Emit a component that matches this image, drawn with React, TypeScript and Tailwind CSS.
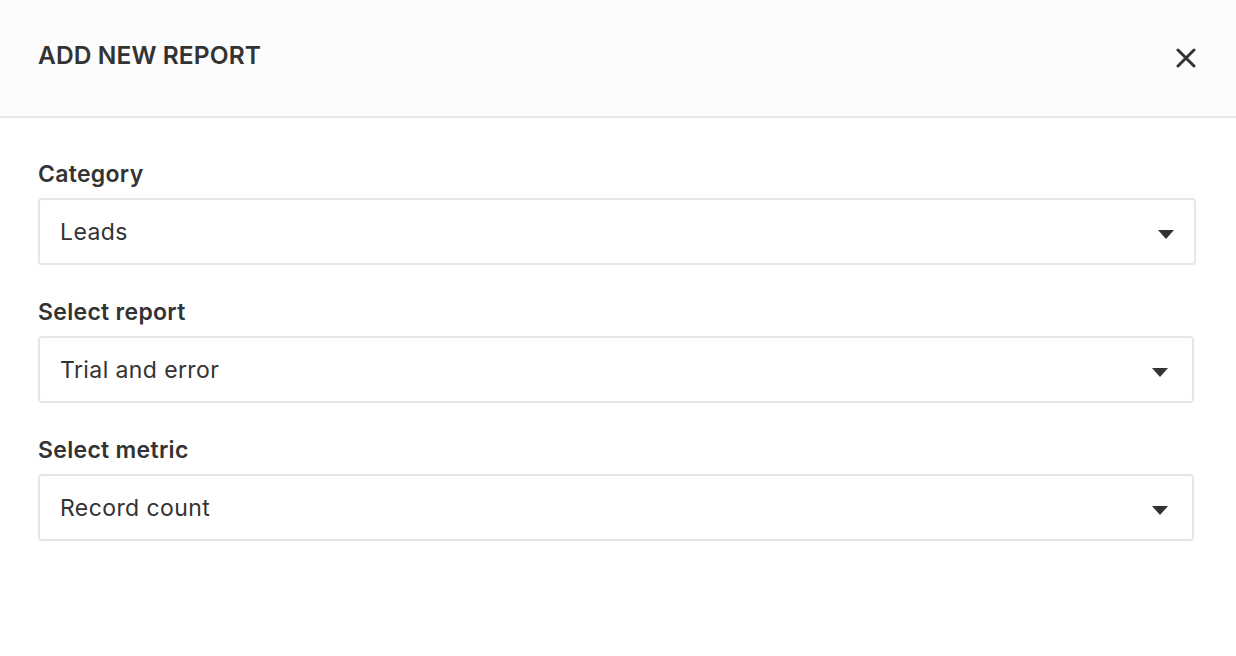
import React from 'react';

type FieldProps = {
    label: string;
    value: string;
    width: string;
    pad: string;
};

const Field: React.FC<FieldProps> = ({ label, value, width, pad }) => (
    <div className="flex flex-col">
        <label className="text-[23px] leading-[26px] font-semibold text-[#333] tracking-[0.3px]">{label}</label>
        <div className={`mt-[11px] h-[67px] ${width} ${pad} flex items-center justify-between border-2 border-[#e6e6e6] rounded-[4px] bg-white pl-[20px]`}>
            <span className="text-[23px] leading-[28px] text-[#333] tracking-[0.4px]">{value}</span>
            {/* caret */}
            <svg width="16" height="9" viewBox="0 0 16 9" className="mt-[5px] text-[#333]">
                <path d="M0 0 H16 L8 9 Z" fill="currentColor" />
            </svg>
        </div>
    </div>
);

const App: React.FC = () => {
    const fields = [
        { label: 'Category', value: 'Leads', width: 'w-[1158px]', pad: 'pr-[20px]' },
        { label: 'Select report', value: 'Trial and error', width: 'w-[1156px]', pad: 'pr-[24px]' },
        { label: 'Select metric', value: 'Record count', width: 'w-[1156px]', pad: 'pr-[24px]' },
    ];

    return (
        <div className="w-[1236px] h-[656px] bg-white font-['Inter','Lato','Liberation_Sans',sans-serif] overflow-hidden">
            {/* Header */}
            <div className="h-[118px] bg-[#fcfcfc] border-b-2 border-[#e6e6e6] flex items-start justify-between pl-[38px] pr-[40px] pt-[41px]">
                <h2 className="text-[24.5px] leading-[29px] font-semibold text-[#333] tracking-[0.1px]">ADD NEW REPORT</h2>
                <button className="mt-[7px] text-[#333]">
                    <svg width="20" height="20" viewBox="0 0 20 20">
                        <path d="M2 2 L18 18 M18 2 L2 18" stroke="currentColor" strokeWidth="3" strokeLinecap="round" />
                    </svg>
                </button>
            </div>

            {/* Body */}
            <div className="pl-[38px] pt-[43px] flex flex-col gap-[34px]">
                {fields.map(f => (
                    <Field key={f.label} label={f.label} value={f.value} width={f.width} pad={f.pad} />
                ))}
            </div>
        </div>
    );
};

export default App;
